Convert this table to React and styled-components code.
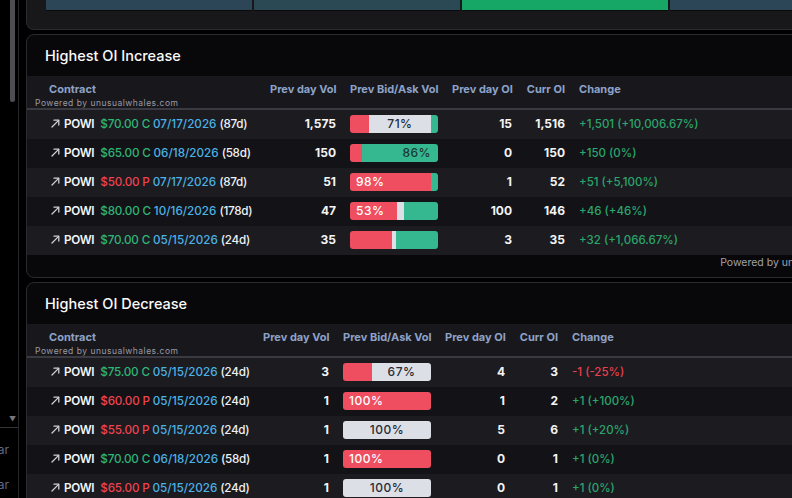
import React from "react";
import styled, { createGlobalStyle } from "styled-components";

const GlobalStyle = createGlobalStyle`
  html, body {
    margin: 0;
    padding: 0;
    background: #000;
    overflow: hidden;
  }
  body {
    font-family: Inter, "Liberation Sans", sans-serif;
    color: #f4f4f5;
  }
`;

const increaseRows = [
  { side: "C", strike: "$70.00", exp: "07/17/2026", dte: "87d", vol: "1,575", bar: [["red", 21.5], ["gray", 70.5], ["green", 8]], label: "gray", pct: "71%", prevOi: "15", currOi: "1,516", change: "+1,501 (+10,006.67%)" },
  { side: "C", strike: "$65.00", exp: "06/18/2026", dte: "58d", vol: "150", bar: [["red", 14], ["green", 86]], label: "green", pct: "86%", prevOi: "0", currOi: "150", change: "+150 (0%)" },
  { side: "P", strike: "$50.00", exp: "07/17/2026", dte: "87d", vol: "51", bar: [["red", 92], ["green", 8]], label: "red", pct: "98%", prevOi: "1", currOi: "52", change: "+51 (+5,100%)" },
  { side: "C", strike: "$80.00", exp: "10/16/2026", dte: "178d", vol: "47", bar: [["red", 53.4], ["gray", 8], ["green", 38.6]], label: "red", pct: "53%", prevOi: "100", currOi: "146", change: "+46 (+46%)" },
  { side: "C", strike: "$70.00", exp: "05/15/2026", dte: "24d", vol: "35", bar: [["red", 47.7], ["gray", 4.6], ["green", 47.7]], label: null, pct: "", prevOi: "3", currOi: "35", change: "+32 (+1,066.67%)" },
];

const decreaseRows = [
  { side: "C", strike: "$75.00", exp: "05/15/2026", dte: "24d", vol: "3", bar: [["red", 33], ["gray", 67]], label: "gray", pct: "67%", prevOi: "4", currOi: "3", change: "-1 (-25%)" },
  { side: "P", strike: "$60.00", exp: "05/15/2026", dte: "24d", vol: "1", bar: [["red", 100]], label: "red", pct: "100%", prevOi: "1", currOi: "2", change: "+1 (+100%)" },
  { side: "P", strike: "$55.00", exp: "05/15/2026", dte: "24d", vol: "1", bar: [["gray", 100]], label: "gray", pct: "100%", prevOi: "5", currOi: "6", change: "+1 (+20%)" },
  { side: "C", strike: "$70.00", exp: "06/18/2026", dte: "58d", vol: "1", bar: [["red", 100]], label: "red", pct: "100%", prevOi: "0", currOi: "1", change: "+1 (0%)" },
  { side: "P", strike: "$65.00", exp: "05/15/2026", dte: "24d", vol: "1", bar: [["gray", 100]], label: "gray", pct: "100%", prevOi: "0", currOi: "1", change: "+1 (0%)" },
];

const segColors = { red: "#ef4e60", gray: "#dcdfe5", green: "#35b78f" };
const segText = { red: "#ffffff", gray: "#262b36", green: "#1b3a30" };
const segAlign = { red: "flex-start", gray: "center", green: "flex-end" };
const segPad = { red: "0 0 0 6px", gray: "0", green: "0 7px 0 0" };

function ArrowIcon() {
  return (
    <svg width="9" height="9" viewBox="0 0 9 9" fill="none">
      <path d="M1 8L7.6 1.4" stroke="#cfcfd4" strokeWidth="1.3" strokeLinecap="round" />
      <path d="M3 1.2H7.8V6" stroke="#cfcfd4" strokeWidth="1.3" strokeLinecap="round" strokeLinejoin="round" />
    </svg>
  );
}

function RatioBar({ row }) {
  return (
    <Bar>
      {row.bar.map(([tone, width], i) => (
        <Seg key={i} $tone={tone} style={{ width: `${width}%` }}>
          {row.label === tone && <SegLabel $tone={tone}>{row.pct}</SegLabel>}
        </Seg>
      ))}
    </Bar>
  );
}

function OiTable({ title, rows, columns }) {
  return (
    <Card>
      <Title>{title}</Title>
      <HeaderRow $columns={columns}>
        <HeadCell $pad="22px">Contract</HeadCell>
        <HeadCell $right>Prev day Vol</HeadCell>
        <HeadCell>Prev Bid/Ask Vol</HeadCell>
        <HeadCell $right>Prev day OI</HeadCell>
        <HeadCell $right>Curr OI</HeadCell>
        <HeadCell>Change</HeadCell>
        <Watermark>Powered by unusualwhales.com</Watermark>
      </HeaderRow>
      {rows.map((row, i) => (
        <Row key={i} $columns={columns} $odd={i % 2 === 0}>
          <ContractCell>
            <ArrowIcon />
            <Ticker>POWI</Ticker>
            <Strike $put={row.side === "P"}>
              {row.strike} {row.side}
            </Strike>
            <Expiry>{row.exp}</Expiry>
            <Dte>({row.dte})</Dte>
          </ContractCell>
          <NumCell>{row.vol}</NumCell>
          <BarCell>
            <RatioBar row={row} />
          </BarCell>
          <NumCell>{row.prevOi}</NumCell>
          <NumCell>{row.currOi}</NumCell>
          <ChangeCell $down={row.change.startsWith("-")}>{row.change}</ChangeCell>
        </Row>
      ))}
      <Footer>Powered by unusualwhales.com</Footer>
    </Card>
  );
}

export default function App() {
  return (
    <>
      <GlobalStyle />
      <Shell>
        <Sidebar>
          <SidebarTop>
            <ScrollThumb />
            <Caret>▼</Caret>
          </SidebarTop>
          <SideList>
            <SideItem><span>Calendar</span></SideItem>
            <SideItem><span>Sidebar</span></SideItem>
          </SideList>
        </Sidebar>
        <Main>
          <TopCard>
            <Blocks>
              <Block $color="#2c4658" />
              <Block $color="#2b4855" />
              <Block $color="#16a665" />
              <Block $color="#2c4658" />
            </Blocks>
          </TopCard>
          <OiTable
            title="Highest OI Increase"
            rows={increaseRows}
            columns="236px 80px 102px 74px 53px 1fr"
          />
          <OiTable
            title="Highest OI Decrease"
            rows={decreaseRows}
            columns="229px 80px 102px 74px 53px 1fr"
          />
        </Main>
      </Shell>
    </>
  );
}

const Shell = styled.div`
  display: flex;
  width: 920px;
  height: 498px;
  overflow: hidden;
`;

const Sidebar = styled.aside`
  flex: none;
  width: 18px;
  border-right: 1px solid #26262a;
  display: flex;
  flex-direction: column;
`;

const SidebarTop = styled.div`
  flex: none;
  height: 428px;
  box-sizing: border-box;
  border-bottom: 1px solid #333338;
  display: flex;
  flex-direction: column;
  justify-content: space-between;
`;

const ScrollThumb = styled.div`
  margin-left: 10px;
  width: 5px;
  height: 102px;
  background: #4e4e52;
  border-radius: 0 0 3px 3px;
`;

const Caret = styled.div`
  align-self: flex-end;
  margin: 0 2px 4px 0;
  font-size: 7px;
  line-height: 7px;
  color: #77777c;
`;

const SideList = styled.div`
  padding-top: 4px;
`;

const SideItem = styled.div`
  width: 9px;
  height: 35px;
  overflow: hidden;
  display: flex;
  align-items: center;
  justify-content: flex-end;
  font-size: 12px;
  color: #5c6a86;
  white-space: nowrap;
`;

const Main = styled.main`
  flex: none;
  width: 866px;
  margin-left: 7px;
  display: flex;
  flex-direction: column;
  gap: 4px;
`;

const TopCard = styled.div`
  flex: none;
  background: #18181b;
  border: 1px solid #2a2a2f;
  border-top: none;
  border-radius: 0 0 8px 8px;
  padding: 0 19px 18px;
`;

const Blocks = styled.div`
  display: grid;
  grid-template-columns: repeat(4, 206px);
  gap: 2px;
`;

const Block = styled.div`
  height: 10px;
  background: ${(p) => p.$color};
  border-bottom: 1px solid #0b0b0d;
`;

const Card = styled.section`
  flex: none;
  background: #08080a;
  border: 1px solid #2a2a2f;
  border-radius: 8px;
  overflow: hidden;
`;

const Title = styled.h2`
  margin: 0;
  height: 41px;
  padding-left: 18px;
  display: flex;
  align-items: center;
  font-size: 14.5px;
  font-weight: 500;
  color: #fafafa;
`;

const HeaderRow = styled.div`
  position: relative;
  display: grid;
  grid-template-columns: ${(p) => p.$columns};
  align-items: center;
  box-sizing: border-box;
  height: 34px;
  padding-bottom: 6px;
  background: #18181c;
  border-bottom: 2px solid #3a3a43;
`;

const HeadCell = styled.div`
  padding: 0 7px 0 ${(p) => p.$pad || "7px"};
  text-align: ${(p) => (p.$right ? "right" : "left")};
  font-size: 11px;
  font-weight: 700;
  color: #8ea2c8;
  white-space: nowrap;
`;

const Watermark = styled.div`
  position: absolute;
  left: 8px;
  bottom: 0;
  font-size: 8.5px;
  line-height: 10px;
  letter-spacing: 0.5px;
  color: #9a9aa4;
  white-space: nowrap;
`;

const Row = styled.div`
  display: grid;
  grid-template-columns: ${(p) => p.$columns};
  align-items: center;
  height: 29px;
  padding-bottom: 2px;
  box-sizing: border-box;
  background: ${(p) => (p.$odd ? "#1b1b20" : "#131317")};
  font-size: 12px;
`;

const ContractCell = styled.div`
  display: flex;
  align-items: center;
  padding-left: 24px;
  white-space: nowrap;
  font-size: 11.7px;
  font-weight: 500;
  svg {
    flex: none;
    margin-right: 4px;
  }
`;

const Ticker = styled.span`
  font-weight: 600;
  letter-spacing: -0.3px;
  color: #f4f6fa;
  margin-right: 6px;
`;

const Strike = styled.span`
  color: ${(p) => (p.$put ? "#f0434f" : "#2fb577")};
  letter-spacing: -0.2px;
  margin-right: 3px;
`;

const Expiry = styled.span`
  color: #4cb2e6;
  margin-right: 3px;
`;

const Dte = styled.span`
  font-weight: 500;
  letter-spacing: -0.3px;
  color: #eef0f4;
`;

const NumCell = styled.div`
  padding: 0 7px;
  text-align: right;
  font-weight: 700;
  color: #f4f4f5;
`;

const BarCell = styled.div`
  padding: 0 7px;
  display: flex;
`;

const Bar = styled.div`
  display: flex;
  width: 88px;
  height: 18px;
  border-radius: 3px;
  overflow: hidden;
`;

const Seg = styled.div`
  flex: none;
  height: 100%;
  box-sizing: border-box;
  display: flex;
  align-items: center;
  justify-content: ${(p) => segAlign[p.$tone]};
  padding: ${(p) => segPad[p.$tone]};
  background: ${(p) => segColors[p.$tone]};
`;

const SegLabel = styled.span`
  font-size: 12px;
  font-weight: 500;
  letter-spacing: 0.5px;
  color: ${(p) => segText[p.$tone]};
  white-space: nowrap;
`;

const ChangeCell = styled.div`
  padding: 0 7px;
  font-size: 11.5px;
  font-weight: 500;
  color: ${(p) => (p.$down ? "#e5414f" : "#2ba56d")};
  white-space: nowrap;
`;

const Footer = styled.div`
  height: 22px;
  box-sizing: border-box;
  padding: 2px 11px 0 0;
  display: flex;
  align-items: flex-start;
  justify-content: flex-end;
  font-size: 10.5px;
  line-height: 12px;
  color: #a1a1aa;
`;
